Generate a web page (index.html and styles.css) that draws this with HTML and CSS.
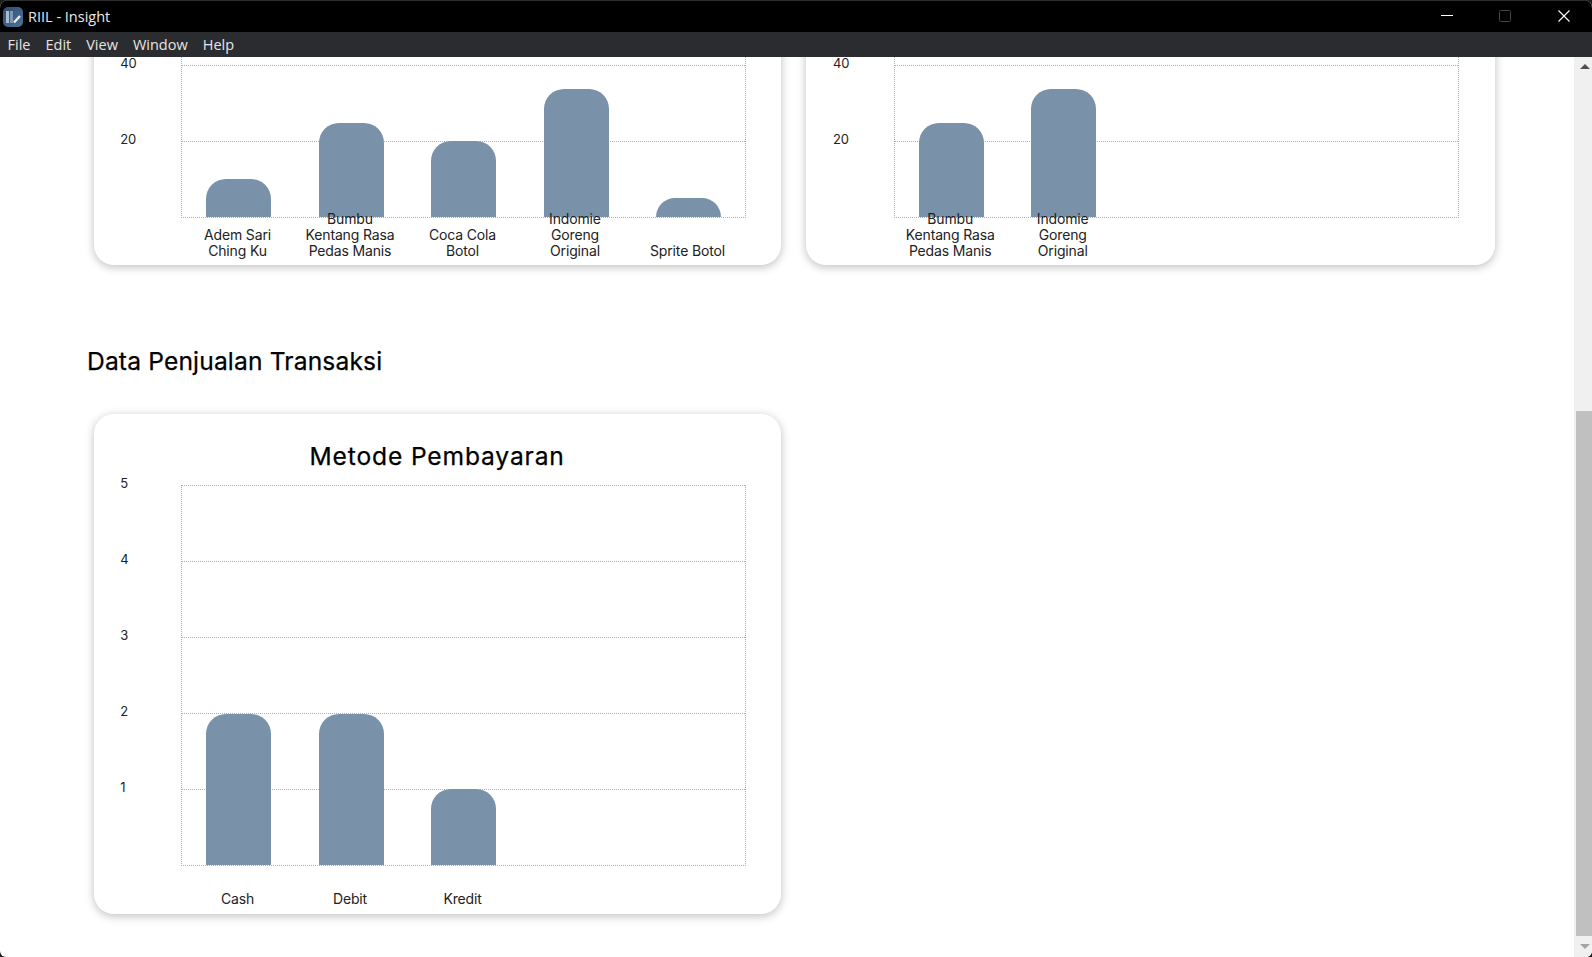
FILE: index.html
```html
<!DOCTYPE html>
<html lang="en">
<head>
<meta charset="utf-8">
<title>RIIL - Insight</title>
<link rel="stylesheet" href="styles.css">
</head>
<body>
<div class="window">
  <header class="titlebar">
    <svg class="logo" viewBox="0 0 20 20" aria-hidden="true">
      <defs>
        <linearGradient id="lg" x1="0" y1="0" x2="1" y2="1">
          <stop offset="0" stop-color="#2f4c74"/>
          <stop offset="1" stop-color="#4f7396"/>
        </linearGradient>
      </defs>
      <rect width="20" height="20" rx="5" fill="url(#lg)"/>
      <rect x="3" y="4" width="3" height="12" fill="#a9bccf"/>
      <rect x="7" y="4" width="3" height="12" fill="#7f99b3"/>
      <path d="M11 15.5 L17 9" stroke="#e8eef4" stroke-width="2.4" fill="none"/>
    </svg>
    <span class="app-title">RIIL - Insight</span>
    <div class="win-controls">
      <svg class="win-btn" viewBox="0 0 12 12" aria-hidden="true"><path d="M0 5.5H12" stroke="#fff" stroke-width="1" fill="none"/></svg>
      <svg class="win-btn" viewBox="0 0 12 12" aria-hidden="true"><rect x=".5" y=".5" width="11" height="11" rx="1" stroke="#444" fill="none"/></svg>
      <svg class="win-btn" viewBox="0 0 12 12" aria-hidden="true"><path d="M.5 .5L11.5 11.5M11.5 .5L.5 11.5" stroke="#fff" stroke-width="1.1" fill="none"/></svg>
    </div>
  </header>
  <nav class="menubar">
    <span class="menu-item">File</span>
    <span class="menu-item">Edit</span>
    <span class="menu-item">View</span>
    <span class="menu-item">Window</span>
    <span class="menu-item">Help</span>
  </nav>
  <div class="viewport">
    <main class="content">
      <section class="chart-row scrolled">
        <article class="card">
          <div class="card-title"></div>
          <div class="plot">
            <div class="grid-lines">
              <div class="grid-line"></div>
              <div class="grid-line"></div>
              <div class="grid-line"></div>
              <div class="grid-line"><span class="tick">40</span></div>
              <div class="grid-line"><span class="tick">20</span></div>
            </div>
            <div class="bars">
              <div class="bar-slot"><div class="bar" style="height:10%"></div></div>
              <div class="bar-slot"><div class="bar" style="height:25%"></div></div>
              <div class="bar-slot"><div class="bar" style="height:20%"></div></div>
              <div class="bar-slot"><div class="bar" style="height:33.8%"></div></div>
              <div class="bar-slot"><div class="bar" style="height:5%"></div></div>
            </div>
          </div>
          <div class="labels">
            <div class="label">Adem Sari Ching Ku</div>
            <div class="label">Bumbu Kentang Rasa Pedas Manis</div>
            <div class="label">Coca Cola Botol</div>
            <div class="label">Indomie Goreng Original</div>
            <div class="label">Sprite Botol</div>
          </div>
        </article>
        <article class="card card-wide">
          <div class="card-title"></div>
          <div class="plot">
            <div class="grid-lines">
              <div class="grid-line"></div>
              <div class="grid-line"></div>
              <div class="grid-line"></div>
              <div class="grid-line"><span class="tick">40</span></div>
              <div class="grid-line"><span class="tick">20</span></div>
            </div>
            <div class="bars">
              <div class="bar-slot"><div class="bar" style="height:25%"></div></div>
              <div class="bar-slot"><div class="bar" style="height:33.8%"></div></div>
              <div class="bar-slot"></div>
              <div class="bar-slot"></div>
              <div class="bar-slot"></div>
            </div>
          </div>
          <div class="labels">
            <div class="label">Bumbu Kentang Rasa Pedas Manis</div>
            <div class="label">Indomie Goreng Original</div>
            <div class="label"></div>
            <div class="label"></div>
            <div class="label"></div>
          </div>
        </article>
      </section>

      <h2 class="section-title">Data Penjualan Transaksi</h2>

      <section class="chart-row">
        <article class="card">
          <h3 class="card-title">Metode Pembayaran</h3>
          <div class="plot">
            <div class="grid-lines">
              <div class="grid-line"><span class="tick">5</span></div>
              <div class="grid-line"><span class="tick">4</span></div>
              <div class="grid-line"><span class="tick">3</span></div>
              <div class="grid-line"><span class="tick">2</span></div>
              <div class="grid-line"><span class="tick">1</span></div>
            </div>
            <div class="bars">
              <div class="bar-slot"><div class="bar" style="height:40%"></div></div>
              <div class="bar-slot"><div class="bar" style="height:40%"></div></div>
              <div class="bar-slot"><div class="bar" style="height:20%"></div></div>
              <div class="bar-slot"></div>
              <div class="bar-slot"></div>
            </div>
          </div>
          <div class="labels">
            <div class="label">Cash</div>
            <div class="label">Debit</div>
            <div class="label">Kredit</div>
            <div class="label"></div>
            <div class="label"></div>
          </div>
        </article>
      </section>
    </main>
    <aside class="scrollbar" aria-hidden="true">
      <div class="arrow-box"><span class="arrow-up"></span></div>
      <div class="track"><div class="thumb"></div></div>
      <div class="arrow-box"><span class="arrow-down"></span></div>
    </aside>
  </div>
</div>
</body>
</html>
```

FILE: styles.css
```css
* { box-sizing: border-box; }

html, body {
  margin: 0;
  height: 100%;
  overflow: hidden;
  background: #1c1c1c;
}

.window {
  height: 957px;
  display: flex;
  flex-direction: column;
  background: #fff;
  border-radius: 8px 8px 6px 6px;
  overflow: hidden;
}

.titlebar {
  flex: 0 0 32px;
  display: flex;
  align-items: center;
  padding-left: 3px;
  background: #000;
  color: #fff;
  border-top: 1px solid #2e2e2e;
  font: 14.5px "Open Sans", "Noto Sans", sans-serif;
}

.logo { width: 20px; height: 20px; margin-right: 5px; }

.app-title { flex: 1; color: #e8e8e8; }

.win-controls { display: flex; align-items: center; margin-bottom: 1px; }

.win-btn { width: 12px; height: 12px; margin-right: 46px; }
.win-btn:nth-child(2) { margin-right: 47px; }
.win-btn:last-child { margin-right: 22px; }

.menubar {
  flex: 0 0 25px;
  display: flex;
  align-items: center;
  gap: 15px;
  padding-left: 7.5px;
  background: #2b2c30;
  color: #e4e4e4;
  font: 14.5px "Open Sans", "Noto Sans", sans-serif;
}

.viewport {
  flex: 1;
  min-height: 0;
  display: flex;
  overflow: hidden;
}

.content {
  flex: 1;
  min-width: 0;
  padding-left: 94px;
  font-family: Inter, "Liberation Sans", sans-serif;
}

.chart-row {
  display: flex;
  gap: 25px;
}

.chart-row.scrolled { margin-top: -292px; }

.card {
  flex: 0 0 687px;
  height: 500px;
  background: #fff;
  border-radius: 20px;
  box-shadow: 0 2px 10px rgba(0, 0, 0, .26);
  padding-left: 87.25px;
  display: flex;
  flex-direction: column;
}

.card-wide {
  flex-basis: 689px;
  padding-left: 88px;
}

.card-title {
  flex: 0 0 71px;
  margin: 0 0 0 -88px;
  padding-top: 26px;
  text-align: center;
  font-size: 24.6px;
  line-height: 32px;
  font-weight: 400;
  letter-spacing: .85px;
  -webkit-text-stroke: .25px #000;
  color: #000;
}

.scrolled .card-title { flex-basis: 72px; }

.plot {
  position: relative;
  flex: 0 0 381px;
  width: 565px;
  border: 1px dotted #adadad;
  border-top: 0;
}

.grid-lines {
  position: absolute;
  inset: 0;
  display: flex;
  flex-direction: column;
}

.grid-line {
  flex: 1;
  position: relative;
  border-top: 1px dotted #adadad;
}

.tick {
  position: absolute;
  left: -62px;
  top: -9px;
  font-size: 13px;
  letter-spacing: -.1px;
  line-height: 12px;
  color: #222;
}

.bars {
  position: absolute;
  inset: 2px 0 0;
  display: grid;
  grid-template-columns: repeat(5, 1fr);
}

.bar-slot {
  display: flex;
  align-items: flex-end;
  justify-content: center;
}

.bar {
  width: 65px;
  background: #7991a9;
  border-radius: 20px 20px 0 0;
}

.labels {
  position: relative;
  width: 562.5px;
  flex: 0 0 41px;
  display: grid;
  grid-template-columns: repeat(5, 1fr);
  grid-template-rows: 41px;
  align-items: end;
}

.label {
  justify-self: center;
  max-width: 92px;
  text-align: center;
  font-size: 14px;
  letter-spacing: -.15px;
  line-height: 16px;
  color: #222;
}

.section-title {
  margin: 80px 0 36px -7px;
  font-size: 24.6px;
  line-height: 33px;
  font-weight: 400;
  letter-spacing: .15px;
  -webkit-text-stroke: .25px #000;
  color: #000;
}

.scrollbar {
  flex: 0 0 18px;
  display: flex;
  flex-direction: column;
  background: #f0f0f0;
}

.arrow-box {
  flex: 0 0 21px;
  display: flex;
  align-items: center;
  justify-content: center;
  padding-left: 3px;
}

.arrow-up {
  border-left: 5px solid transparent;
  border-right: 5px solid transparent;
  border-bottom: 5px solid #505050;
  margin-top: -3px;
}

.arrow-down {
  border-left: 5px solid transparent;
  border-right: 5px solid transparent;
  border-top: 5px solid #a3a3a3;
}

.track {
  flex: 1;
  display: flex;
  flex-direction: column;
  justify-content: flex-end;
}

.thumb {
  height: 525px;
  margin-left: 2px;
  background: #c0c0c0;
}
```
